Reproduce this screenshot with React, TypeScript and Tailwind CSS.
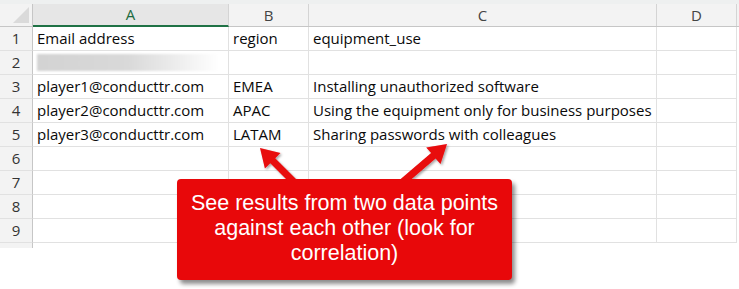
import React from "react";

const cols = [
  { key: "A", width: 196 },
  { key: "B", width: 80 },
  { key: "C", width: 348 },
  { key: "D", width: 80 },
];

const rows: string[][] = [
  ["Email address", "region", "equipment_use", ""],
  ["", "", "", ""],
  ["player1@conducttr.com", "EMEA", "Installing unauthorized software", ""],
  ["player2@conducttr.com", "APAC", "Using the equipment only for business purposes", ""],
  ["player3@conducttr.com", "LATAM", "Sharing passwords with colleagues", ""],
  ["", "", "", ""],
  ["", "", "", ""],
  ["", "", "", ""],
  ["", "", "", ""],
];

// thick arrow polygon from (x1,y1) to tip (x2,y2)
function arrowPoints(x1: number, y1: number, x2: number, y2: number, shaft = 7, headW = 22, headL = 18) {
  const dx = x2 - x1;
  const dy = y2 - y1;
  const len = Math.hypot(dx, dy);
  const ux = dx / len;
  const uy = dy / len;
  const nx = -uy;
  const ny = ux;
  const bx = x2 - ux * headL;
  const by = y2 - uy * headL;
  const p = (x: number, y: number) => `${x.toFixed(1)},${y.toFixed(1)}`;
  return [
    p(x1 + nx * shaft / 2, y1 + ny * shaft / 2),
    p(bx + nx * shaft / 2, by + ny * shaft / 2),
    p(bx + nx * headW / 2, by + ny * headW / 2),
    p(x2, y2),
    p(bx - nx * headW / 2, by - ny * headW / 2),
    p(bx - nx * shaft / 2, by - ny * shaft / 2),
    p(x1 - nx * shaft / 2, y1 - ny * shaft / 2),
  ].join(" ");
}

export default function App() {
  return (
    <div
      className="relative w-[739px] h-[289px] bg-white overflow-hidden text-[#0a0a0a]"
      style={{ fontFamily: '"Open Sans", "Noto Sans", sans-serif' }}
    >
      <div className="h-[4px] bg-[#eef0f0]" />

      {/* column headers */}
      <div className="flex h-[23px] bg-[#f3f3f3] border-b border-[#c6c6c6]">
        <div className="w-[33px] shrink-0 border-r border-[#c6c6c6] relative">
          <svg className="absolute right-[3px] bottom-[3px]" width="16" height="16" viewBox="0 0 16 16">
            <polygon points="16,0 16,16 0,16" fill="#dadada" />
          </svg>
        </div>
        {cols.map((c) => (
          <div
            key={c.key}
            className={
              c.key === "A"
                ? "shrink-0 flex items-center justify-center text-[15px] text-[#1c6b40] border-r border-[#d4d4d4] bg-[#e6e6e6] border-b-2 border-b-[#1f7245] -mb-px"
                : "shrink-0 flex items-center justify-center text-[15px] text-[#444] border-r border-[#d4d4d4]"
            }
            style={{ width: c.width }}
          >
            {c.key}
          </div>
        ))}
      </div>

      {/* rows */}
      {rows.map((r, i) => (
        <div key={i} className="flex h-[24px]">
          <div className="w-[33px] shrink-0 bg-[#f3f3f3] border-r border-[#c6c6c6] border-b border-b-[#e1e1e1] flex items-center justify-center text-[15px] text-[#333]">
            {i + 1}
          </div>
          {cols.map((c, j) => (
            <div
              key={c.key}
              className="shrink-0 border-r border-b border-[#e1e1e1] flex items-center pl-[4px] text-[15px] leading-none whitespace-nowrap"
              style={{ width: c.width }}
            >
              {i === 1 && j === 0 ? (
                <div className="h-[17px] w-[182px] bg-gradient-to-r from-[#d3d3d3] via-[#d9d9d9] to-white blur-[1px]" />
              ) : (
                r[j]
              )}
            </div>
          ))}
        </div>
      ))}
      <div className="w-[33px] h-[5px] bg-[#f3f3f3] border-r border-[#c6c6c6]" />

      {/* arrows */}
      <svg className="absolute inset-0 pointer-events-none" width="739" height="289">
        <defs>
          <filter id="sh" x="-20%" y="-20%" width="140%" height="140%">
            <feDropShadow dx="1.5" dy="1.5" stdDeviation="1" floodColor="#000" floodOpacity="0.35" />
          </filter>
        </defs>
        <polygon points={arrowPoints(298, 186, 260, 148)} fill="#e8080a" filter="url(#sh)" />
        <polygon points={arrowPoints(398, 186, 447, 144)} fill="#e8080a" filter="url(#sh)" />
      </svg>

      {/* callout */}
      <div
        className="absolute left-[177px] top-[179px] w-[335px] h-[101px] rounded-[4px] bg-[#e8080a] shadow-[3px_4px_4px_rgba(0,0,0,0.45)] flex items-center justify-center text-center text-white text-[21.5px] leading-[25px]"
        style={{ fontFamily: '"Liberation Sans", Arial, sans-serif' }}
      >
        <div className="pb-[2px]">
          See results from two data points
          <br />
          against each other (look for
          <br />
          correlation)
        </div>
      </div>
    </div>
  );
}
